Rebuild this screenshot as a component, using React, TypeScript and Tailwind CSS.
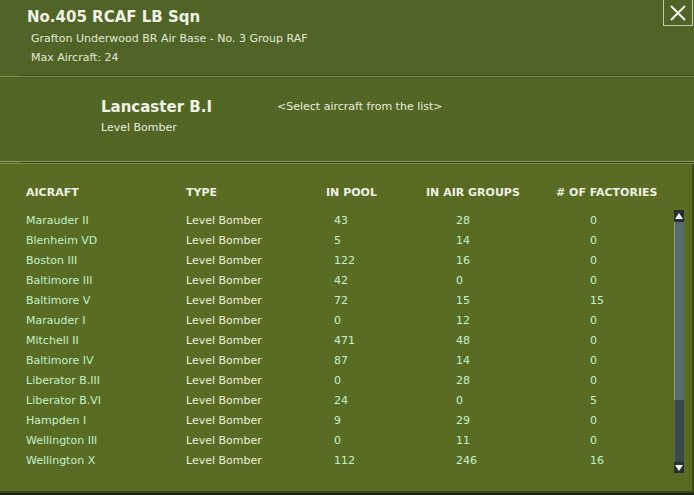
import React from "react";

const rows: [string, string, string, string, string][] = [
  ["Marauder II", "Level Bomber", "43", "28", "0"],
  ["Blenheim VD", "Level Bomber", "5", "14", "0"],
  ["Boston III", "Level Bomber", "122", "16", "0"],
  ["Baltimore III", "Level Bomber", "42", "0", "0"],
  ["Baltimore V", "Level Bomber", "72", "15", "15"],
  ["Marauder I", "Level Bomber", "0", "12", "0"],
  ["Mitchell II", "Level Bomber", "471", "48", "0"],
  ["Baltimore IV", "Level Bomber", "87", "14", "0"],
  ["Liberator B.III", "Level Bomber", "0", "28", "0"],
  ["Liberator B.VI", "Level Bomber", "24", "0", "5"],
  ["Hampden I", "Level Bomber", "9", "29", "0"],
  ["Wellington III", "Level Bomber", "0", "11", "0"],
  ["Wellington X", "Level Bomber", "112", "246", "16"],
];

export default function App() {
  return (
    <div
      className="w-[694px] h-[495px] overflow-hidden flex flex-col bg-[#4f6426] text-[#eceedd] relative"
      style={{ fontFamily: '"DejaVu Sans", Verdana, sans-serif' }}
    >
      {/* Header */}
      <div className="h-[75px] pl-[27px] pt-[7px] flex flex-col shrink-0">
        <div className="text-[15px] font-bold leading-[20px] text-[#f0f2e4]">No.405 RCAF LB Sqn</div>
        <div className="pl-[4px] text-[11px] leading-[19px] mt-[2px] text-[#e4e8d6]">
          Grafton Underwood BR Air Base - No. 3 Group RAF
        </div>
        <div className="pl-[4px] text-[11px] leading-[19px] text-[#e4e8d6]">Max Aircraft: 24</div>
      </div>
      <button className="absolute right-[1px] top-0 w-[30px] h-[26px] border border-t-0 border-[#c4cca8] flex items-center justify-center">
        <svg width="18" height="18" viewBox="0 0 18 18">
          <path d="M2 2 L16 16 M16 2 L2 16" stroke="#f4f6ec" strokeWidth="2" />
        </svg>
      </button>
      <div className="h-[1px] ml-[20px] bg-[#34461a] shrink-0" />
      <div className="h-[1px] bg-[#7f904c] shrink-0" />
      <div className="h-[1px] bg-[#4a5e22] shrink-0" />

      {/* Selected aircraft */}
      <div className="h-[83px] shrink-0 flex pl-[101px] pt-[19px] bg-[#526626]">
        <div className="w-[176px] flex flex-col">
          <div className="text-[15px] font-bold leading-[20px] text-[#f0f2e4]">Lancaster B.I</div>
          <div className="text-[11px] leading-[16px] mt-[3px] text-[#e8ecda]">Level Bomber</div>
        </div>
        <div className="text-[11px] leading-[16px] pt-[2px] text-[#e8ecda]">&lt;Select aircraft from the list&gt;</div>
      </div>
      <div className="h-[1px] bg-[#8c9c5a] shrink-0" />
      <div className="h-[1px] ml-[20px] bg-[#2f3f16] shrink-0" />
      <div className="h-[1px] bg-[#7d8d4c] shrink-0" />

      {/* Table */}
      <div className="flex-1 bg-[#5a6b23] flex flex-col pt-[19px] pl-[26px] border-r-2 border-[#3d4a1a]">
        <div className="flex h-[20px] items-center text-[11px] font-bold text-[#eef0e2]">
          <div className="w-[160px]">AICRAFT</div>
          <div className="w-[140px]">TYPE</div>
          <div className="w-[100px]">IN POOL</div>
          <div className="w-[130px]">IN AIR GROUPS</div>
          <div>#&nbsp;OF FACTORIES</div>
        </div>
        <div className="flex mt-[6px]">
          <div className="w-[648px] flex flex-col pt-[2px]">
            {rows.map((r) => (
              <div key={r[0]} className="flex h-[20px] items-center text-[11px]">
                <div className="w-[160px] text-[#c2f2cc]">{r[0]}</div>
                <div className="w-[140px] text-[#eceedd]">{r[1]}</div>
                <div className="w-[100px] pl-[8px] text-[#c2f2cc]">{r[2]}</div>
                <div className="w-[134px] pl-[30px] text-[#c2f2cc]">{r[3]}</div>
                <div className="pl-[30px] text-[#c2f2cc]">{r[4]}</div>
              </div>
            ))}
          </div>
          <div className="w-[10px] h-[263px] mt-[1px] flex flex-col">
            <div className="h-[12px] bg-[#26302e] flex items-center justify-center">
              <svg width="8" height="6" viewBox="0 0 8 6">
                <path d="M4 0 L8 6 L0 6 Z" fill="#f2f4f2" />
              </svg>
            </div>
            <div className="h-[178px] bg-[#566a70] border-l border-[#8a9c9c]" />
            <div className="flex-1 bg-[#3c4a4e] border-l border-[#56666a]" />
            <div className="h-[11px] bg-[#26302e] flex items-center justify-center">
              <svg width="8" height="6" viewBox="0 0 8 6">
                <path d="M0 0 L8 0 L4 6 Z" fill="#f2f4f2" />
              </svg>
            </div>
          </div>
        </div>
      </div>
      <div className="h-[2px] bg-[#3a4620] shrink-0" />
      <div className="h-[2px] bg-[#1e2414] shrink-0" />
    </div>
  );
}
